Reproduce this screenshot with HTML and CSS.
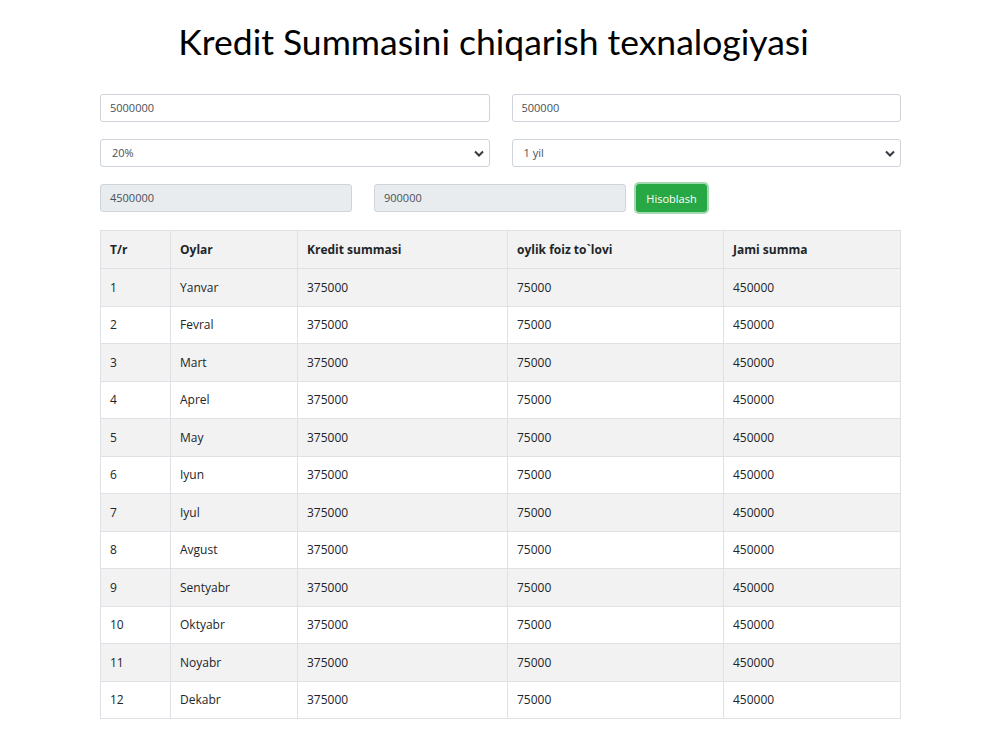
FILE: index.html
```html
<!DOCTYPE html>
<html lang="uz">
<head>
<meta charset="utf-8">
<title>Kredit</title>
<link rel="stylesheet" href="styles.css">
</head>
<body>
<div class="container">
  <h1 class="title">Kredit Summasini chiqarish texnalogiyasi</h1>
  <div class="row two">
    <div class="field">5000000</div>
    <div class="field">500000</div>
  </div>
  <div class="row two">
    <div class="field select">20%<svg class="chev" width="10" height="7" viewBox="0 0 10 7"><path d="M1 1.5 L5 5.5 L9 1.5" fill="none" stroke="#343a40" stroke-width="2"/></svg></div>
    <div class="field select">1 yil<svg class="chev" width="10" height="7" viewBox="0 0 10 7"><path d="M1 1.5 L5 5.5 L9 1.5" fill="none" stroke="#343a40" stroke-width="2"/></svg></div>
  </div>
  <div class="row three">
    <div class="field disabled">4500000</div>
    <div class="field disabled">900000</div>
    <button class="btn">Hisoblash</button>
  </div>
  <table class="tbl">
    <thead>
      <tr><th class="c1">T/r</th><th class="c2">Oylar</th><th class="c3">Kredit summasi</th><th class="c4">oylik foiz to`lovi</th><th>Jami summa</th></tr>
    </thead>
    <tbody>
      <tr><td>1</td><td>Yanvar</td><td>375000</td><td>75000</td><td>450000</td></tr>
      <tr><td>2</td><td>Fevral</td><td>375000</td><td>75000</td><td>450000</td></tr>
      <tr><td>3</td><td>Mart</td><td>375000</td><td>75000</td><td>450000</td></tr>
      <tr><td>4</td><td>Aprel</td><td>375000</td><td>75000</td><td>450000</td></tr>
      <tr><td>5</td><td>May</td><td>375000</td><td>75000</td><td>450000</td></tr>
      <tr><td>6</td><td>Iyun</td><td>375000</td><td>75000</td><td>450000</td></tr>
      <tr><td>7</td><td>Iyul</td><td>375000</td><td>75000</td><td>450000</td></tr>
      <tr><td>8</td><td>Avgust</td><td>375000</td><td>75000</td><td>450000</td></tr>
      <tr><td>9</td><td>Sentyabr</td><td>375000</td><td>75000</td><td>450000</td></tr>
      <tr><td>10</td><td>Oktyabr</td><td>375000</td><td>75000</td><td>450000</td></tr>
      <tr><td>11</td><td>Noyabr</td><td>375000</td><td>75000</td><td>450000</td></tr>
      <tr><td>12</td><td>Dekabr</td><td>375000</td><td>75000</td><td>450000</td></tr>
    </tbody>
  </table>
</div>
</body>
</html>
```
FILE: styles.css
```css
html, body {
  margin: 0;
  padding: 0;
  background: #fff;
}
body {
  font-family: "Open Sans", "Noto Sans", sans-serif;
  color: #212529;
}
.container {
  width: 801px;
  margin: 0 auto;
  padding-top: 20px;
}
.title {
  margin: 0 0 30px;
  padding-right: 14px;
  font-family: "Lato", sans-serif;
  font-weight: 400;
  font-size: 35.5px;
  line-height: 44px;
  text-align: center;
  color: #000;
}
.row {
  display: flex;
  gap: 22px;
  margin-bottom: 17px;
}
.row.two .field { flex: 1 1 0; }
.row.three { margin-bottom: 18px; }
.row.three .field { width: 252px; flex: none; }
.row.three .btn { margin-left: -12px; }
.field {
  height: 28px;
  box-sizing: border-box;
  border: 1px solid #ced4da;
  border-radius: 3px;
  padding: 0 9px;
  font-size: 11px;
  line-height: 26px;
  color: #495057;
  background: #fff;
  display: flex;
  align-items: center;
  justify-content: space-between;
}
.field.select { padding-left: 11px; padding-right: 5px; }
.field.disabled { background: #e9ecef; }
.chev { display: block; }
.btn {
  width: 71px;
  height: 28px;
  border: 1px solid #28a745;
  border-radius: 3px;
  background: #28a745;
  color: #fff;
  font-family: "Open Sans", sans-serif;
  font-size: 11px;
  padding: 0;
  box-shadow: 0 0 0 2px rgba(72, 180, 97, 0.5);
}
.tbl {
  width: 801px;
  border-collapse: collapse;
  font-size: 12px;
}
.tbl th, .tbl td {
  border: 1px solid #dee2e6;
  text-align: left;
  padding: 0 9px;
  height: 37.5px;
  box-sizing: border-box;
}
.tbl th { font-weight: 700; background: #f2f2f2; height: 38px; }
.tbl tbody tr:nth-child(odd) td { background: #f2f2f2; }
.c1 { width: 70px; }
.c2 { width: 127px; }
.c3 { width: 210px; }
.c4 { width: 216px; }
```
